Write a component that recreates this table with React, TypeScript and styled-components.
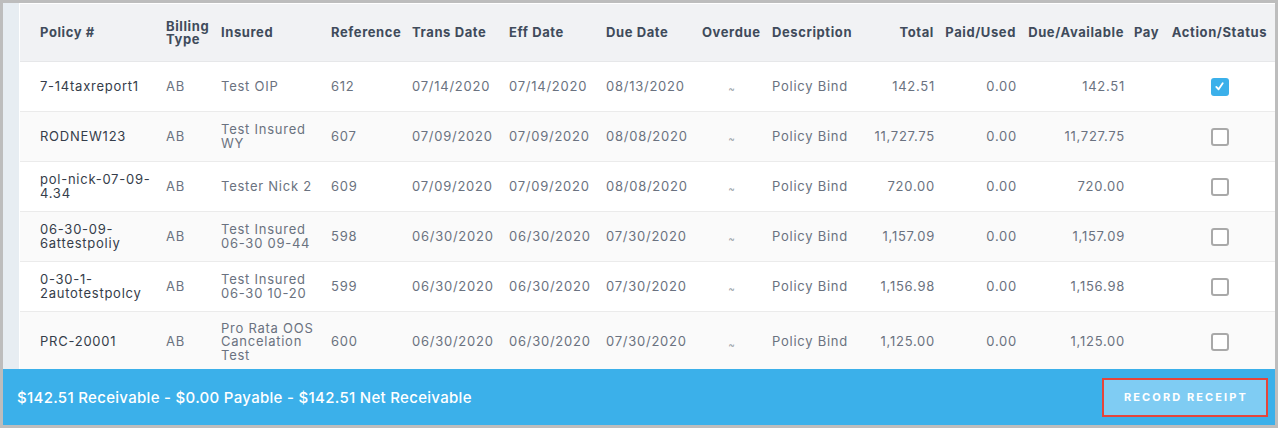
import React from "react";
import styled, { createGlobalStyle } from "styled-components";

const Global = createGlobalStyle`
  html, body { margin: 0; padding: 0; background: #ffffff; }
  body { font-family: Inter, "Noto Sans", sans-serif; }
`;

const Frame = styled.div`
  width: 1278px;
  height: 428px;
  box-sizing: border-box;
  border: 3px solid #bdbdbd;
  display: flex;
  flex-direction: column;
  overflow: hidden;
`;

const Main = styled.div`
  display: flex;
  height: 366px;
  overflow: hidden;
`;

const Strip = styled.div`
  width: 16px;
  flex: none;
  background: #e7edf2;
`;

const TableWrap = styled.div`
  flex: 1;
  background: #ffffff;
  padding: 1px 0 0 1px;
  overflow: hidden;
`;

const Table = styled.table`
  width: 1255px;
  table-layout: fixed;
  border-collapse: collapse;
  font-family: Inter, "Noto Sans", sans-serif;
  font-size: 13px;
`;

type Align = "left" | "right" | "center";

const HeadCell = styled.th<{ $align?: Align; $first?: boolean }>`
  height: 57px;
  padding: 0 5px 0 ${(p) => (p.$first ? "20px" : "5px")};
  background: #f1f2f4;
  border-bottom: 1px solid #e6e7e9;
  color: #404b5b;
  font-weight: 700;
  letter-spacing: 0.6px;
  text-align: ${(p) => p.$align ?? "left"};
  vertical-align: middle;
  line-height: 13px;
  white-space: nowrap;
`;

const WrapHead = styled(HeadCell)`
  white-space: normal;
`;

const Row = styled.tr<{ $shade: boolean }>`
  background: ${(p) => (p.$shade ? "#fafafa" : "#ffffff")};
  border-bottom: 1px solid #ebebeb;
`;

const Cell = styled.td<{ $align?: Align; $first?: boolean; $tall?: boolean }>`
  height: ${(p) => (p.$tall ? "60px" : "49px")};
  padding: 0 ${(p) => (p.$align === "right" ? "4px" : "5px")} 0 ${(p) => (p.$first ? "20px" : "5px")};
  color: ${(p) => (p.$first ? "#353d4a" : "#6a7280")};
  letter-spacing: 0.75px;
  text-align: ${(p) => p.$align ?? "left"};
  vertical-align: middle;
  line-height: 13.5px;
  word-break: break-word;
  white-space: ${(p) => (p.$align === "right" ? "nowrap" : "normal")};
`;

const Tilde = styled.span`
  font-size: 10px;
  color: #9aa0a8;
  position: relative;
  top: 2px;
`;

const Box = styled.span<{ $checked: boolean }>`
  display: inline-flex;
  align-items: center;
  justify-content: center;
  width: 18px;
  height: 18px;
  box-sizing: border-box;
  border-radius: 3px;
  vertical-align: middle;
  background: ${(p) => (p.$checked ? "#3bb0ea" : "#ffffff")};
  border: ${(p) => (p.$checked ? "none" : "2px solid #a9a9a9")};
`;

const Footer = styled.div`
  height: 56px;
  flex: none;
  background: #3bb0ea;
  display: flex;
  align-items: center;
  justify-content: space-between;
  padding: 0 7px 0 14px;
`;

const Summary = styled.div`
  color: #ffffff;
  font-family: Inter, "Noto Sans", sans-serif;
  font-size: 15px;
  font-weight: 500;
  letter-spacing: 0.3px;
`;

const RecordButton = styled.button`
  width: 166px;
  height: 39px;
  box-sizing: border-box;
  border: 2px solid #e5453c;
  background: #7fccf3;
  color: #ffffff;
  font-family: Inter, "Noto Sans", sans-serif;
  font-weight: 700;
  font-size: 11px;
  letter-spacing: 2.1px;
  padding: 0 0 0 2px;
  cursor: pointer;
`;

function Checkbox({ checked }: { checked: boolean }) {
  return (
    <Box $checked={checked}>
      {checked && (
        <svg width="11" height="11" viewBox="0 0 12 12">
          <polyline points="2.5,6.5 5,9 9.5,2.5" fill="none" stroke="#fff" strokeWidth="2" strokeLinecap="round" strokeLinejoin="round" />
        </svg>
      )}
    </Box>
  );
}

type Item = {
  policy: string;
  insured: string;
  ref: string;
  trans: string;
  eff: string;
  due: string;
  total: string;
  paid: string;
  avail: string;
  checked: boolean;
  tall?: boolean;
};

const rows: Item[] = [
  { policy: "7-14taxreport1", insured: "Test OIP", ref: "612", trans: "07/14/2020", eff: "07/14/2020", due: "08/13/2020", total: "142.51", paid: "0.00", avail: "142.51", checked: true },
  { policy: "RODNEW123", insured: "Test Insured WY", ref: "607", trans: "07/09/2020", eff: "07/09/2020", due: "08/08/2020", total: "11,727.75", paid: "0.00", avail: "11,727.75", checked: false },
  { policy: "pol-nick-07-09-4.34", insured: "Tester Nick 2", ref: "609", trans: "07/09/2020", eff: "07/09/2020", due: "08/08/2020", total: "720.00", paid: "0.00", avail: "720.00", checked: false },
  { policy: "06-30-09-6attestpoliy", insured: "Test Insured 06-30 09-44", ref: "598", trans: "06/30/2020", eff: "06/30/2020", due: "07/30/2020", total: "1,157.09", paid: "0.00", avail: "1,157.09", checked: false },
  { policy: "0-30-1-2autotestpolcy", insured: "Test Insured 06-30 10-20", ref: "599", trans: "06/30/2020", eff: "06/30/2020", due: "07/30/2020", total: "1,156.98", paid: "0.00", avail: "1,156.98", checked: false },
  { policy: "PRC-20001", insured: "Pro Rata OOS Cancelation Test", ref: "600", trans: "06/30/2020", eff: "06/30/2020", due: "07/30/2020", total: "1,125.00", paid: "0.00", avail: "1,125.00", checked: false, tall: true },
];

const widths = [141, 55, 110, 81, 97, 97, 96, 70, 99, 73, 82, 108, 35, 111];

export default function App() {
  return (
    <>
      <Global />
      <Frame>
        <Main>
          <Strip />
          <TableWrap>
            <Table>
              <colgroup>
                {widths.map((w, i) => (
                  <col key={i} style={{ width: w }} />
                ))}
              </colgroup>
              <thead>
                <tr>
                  <HeadCell $first>Policy #</HeadCell>
                  <WrapHead>Billing Type</WrapHead>
                  <HeadCell>Insured</HeadCell>
                  <HeadCell>Reference</HeadCell>
                  <HeadCell>Trans Date</HeadCell>
                  <HeadCell>Eff Date</HeadCell>
                  <HeadCell>Due Date</HeadCell>
                  <HeadCell>Overdue</HeadCell>
                  <HeadCell>Description</HeadCell>
                  <HeadCell $align="right">Total</HeadCell>
                  <HeadCell $align="right">Paid/Used</HeadCell>
                  <HeadCell $align="right">Due/Available</HeadCell>
                  <HeadCell>Pay</HeadCell>
                  <HeadCell $align="center">Action/Status</HeadCell>
                </tr>
              </thead>
              <tbody>
                {rows.map((r, i) => (
                  <Row key={r.policy} $shade={i % 2 === 1}>
                    <Cell $first $tall={r.tall}>{r.policy}</Cell>
                    <Cell>AB</Cell>
                    <Cell>{r.insured}</Cell>
                    <Cell>{r.ref}</Cell>
                    <Cell>{r.trans}</Cell>
                    <Cell>{r.eff}</Cell>
                    <Cell>{r.due}</Cell>
                    <Cell $align="center"><Tilde>~</Tilde></Cell>
                    <Cell>Policy Bind</Cell>
                    <Cell $align="right">{r.total}</Cell>
                    <Cell $align="right">{r.paid}</Cell>
                    <Cell $align="right">{r.avail}</Cell>
                    <Cell />
                    <Cell $align="center"><Checkbox checked={r.checked} /></Cell>
                  </Row>
                ))}
              </tbody>
            </Table>
          </TableWrap>
        </Main>
        <Footer>
          <Summary>$142.51 Receivable - $0.00 Payable - $142.51 Net Receivable</Summary>
          <RecordButton>RECORD RECEIPT</RecordButton>
        </Footer>
      </Frame>
    </>
  );
}
